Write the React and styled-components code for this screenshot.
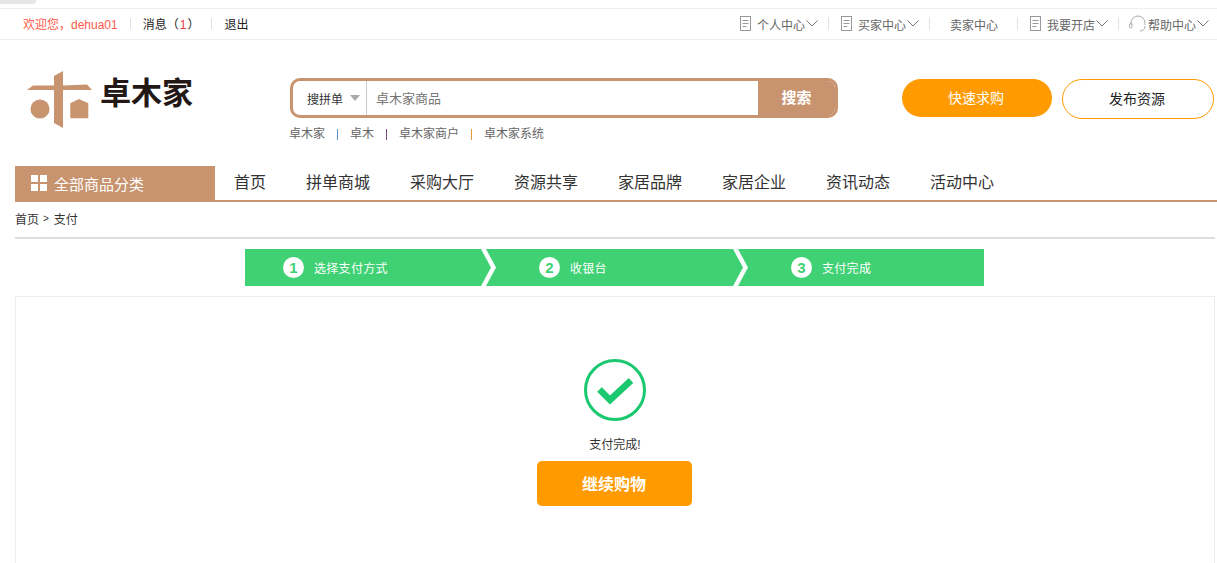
import React from 'react'
import styled, { createGlobalStyle } from 'styled-components'

const GlobalStyle = createGlobalStyle`
  html, body {
    margin: 0;
    padding: 0;
    height: 100%;
    overflow: hidden;
    background: #fff;
  }
  body {
    font-family: "Liberation Sans", "Noto Sans CJK SC", sans-serif;
    font-size: 12px;
    color: #333;
  }
  * { box-sizing: border-box; }
`

const Page = styled.div`
  width: 1217px;
`
const TabStrip = styled.div`
  height: 8px;
`
const TabStub = styled.div`
  width: 36px;
  height: 4px;
  background: #e6e6e6;
  border-bottom-right-radius: 4px;
`
const TopBar = styled.div`
  height: 32px;
  border-top: 1px solid #eee;
  border-bottom: 1px solid #eee;
  display: flex;
  justify-content: space-between;
  align-items: center;
  padding: 0 3px 2px 23px;
`
const TopGroup = styled.div`
  display: flex;
  align-items: center;
`
const Welcome = styled.span`
  color: #ff5a4a;
`
const TopLink = styled.span`
  color: #222;
`
const Red = styled.span`
  color: #e4393c;
  margin: 0 1px;
`
const TopSep = styled.i`
  width: 1px;
  height: 11px;
  background: #dde;
  margin: 0 12px;
`
const MenuItem = styled.div`
  flex: none;
  display: flex;
  align-items: center;
  white-space: nowrap;
  color: #666;
  width: ${p => p.$w}px;
  padding-left: ${p => p.$pad || 0}px;
`
const MenuLabel = styled.span`
  padding-top: 2px;
`
const MenuSep = styled.i`
  width: 1px;
  height: 13px;
  background: #dde3ea;
  flex: none;
`
const Header = styled.div`
  height: 126px;
  display: flex;
  padding: 31px 3px 0 27px;
`
const LogoBox = styled.div`
  width: 263px;
  display: flex;
  align-items: flex-start;
  gap: 8px;
`
const LogoText = styled.div`
  font-size: 31px;
  font-weight: 700;
  line-height: 31px;
  color: #231815;
  margin-top: 7px;
`
const SearchCol = styled.div`
  width: 548px;
  padding-top: 7px;
`
const SearchBox = styled.div`
  height: 40px;
  border: 3px solid #c7946f;
  border-radius: 10px;
  display: flex;
  overflow: hidden;
`
const ScopeSelect = styled.div`
  width: 74px;
  border-right: 1px solid #ccc;
  display: flex;
  align-items: center;
  padding-left: 14px;
  color: #333;
`
const Caret = styled.i`
  margin-left: 7px;
  border: 5px solid transparent;
  border-top: 6px solid #aaa;
  border-bottom: 0;
`
const SearchInput = styled.div`
  flex: 1;
  font-size: 13px;
  color: #757575;
  display: flex;
  align-items: center;
  padding: 0 0 2px 9px;
`
const SearchBtn = styled.div`
  width: 77px;
  background: #c7946f;
  color: #fff;
  font-size: 15px;
  font-weight: 700;
  display: flex;
  align-items: center;
  justify-content: center;
  padding-bottom: 4px;
`
const HotLinks = styled.div`
  display: flex;
  align-items: center;
  margin: 9px 0 0 -1px;
  color: #666;
  line-height: 14px;
`
const HotSep = styled.i`
  width: 1px;
  height: 11px;
  margin: 0 12px;
  background: ${p => p.$c};
`
const Actions = styled.div`
  margin-left: 64px;
  display: flex;
  gap: 10px;
  padding-top: 8px;
  align-items: flex-start;
`
const PillBtn = styled.div`
  height: ${p => (p.$solid ? 38 : 40)}px;
  width: ${p => (p.$solid ? 150 : 152)}px;
  border-radius: 20px;
  display: flex;
  align-items: center;
  justify-content: center;
  font-size: 14px;
  padding: 0 2px 2px 0;
  background: ${p => (p.$solid ? '#ff9a00' : '#fff')};
  color: ${p => (p.$solid ? '#fff' : '#222')};
  border: ${p => (p.$solid ? 'none' : '1px solid #ff9a00')};
`
const NavBar = styled.div`
  margin-left: 15px;
  width: 1202px;
  height: 36px;
  border-bottom: 2px solid #c7946f;
  display: flex;
`
const CategoryBtn = styled.div`
  width: 200px;
  height: 34px;
  background: #c7946f;
  color: #fff;
  font-size: 15px;
  display: flex;
  align-items: center;
  padding-left: 16px;
  gap: 7px;
`
const NavList = styled.div`
  display: flex;
  align-items: center;
  gap: 40px;
  padding: 0 0 4px 19px;
  font-size: 16px;
  color: #333;
  height: 34px;
`
const Crumbs = styled.div`
  margin-left: 15px;
  width: 1200px;
  height: 37px;
  border-bottom: 2px solid #ddd;
  display: flex;
  align-items: center;
  padding-bottom: 2px;
  gap: 4px;
  color: #333;
`
const CrumbArrow = styled.span`
  font-size: 10px;
  margin-right: 1px;
`
const Steps = styled.div`
  margin: 10px 0 10px 245px;
  display: flex;
  width: 739px;
  height: 37px;
`
const Step = styled.div`
  flex: none;
  width: ${p => p.$w}px;
  margin-left: ${p => p.$ml || 0}px;
  height: 37px;
  background: #3fd174;
  color: #fff;
  letter-spacing: 0.3px;
  display: flex;
  align-items: center;
  gap: 10px;
  padding-left: ${p => p.$pad}px;
  clip-path: ${p => p.$clip};
`
const StepNum = styled.span`
  width: 21px;
  height: 21px;
  border-radius: 50%;
  background: #fff;
  color: #3fd174;
  font-size: 15px;
  font-weight: 700;
  display: flex;
  align-items: center;
  justify-content: center;
`
const Card = styled.div`
  margin-left: 15px;
  width: 1200px;
  height: 300px;
  border: 1px solid #eee;
  display: flex;
  flex-direction: column;
  align-items: center;
  padding-top: 62px;
`
const DoneText = styled.div`
  margin-top: 16px;
  line-height: 16px;
  color: #333;
`
const ContinueBtn = styled.div`
  margin: 8px 2px 0 0;
  width: 155px;
  height: 45px;
  border-radius: 5px;
  background: #ff9a00;
  color: #fff;
  font-size: 16px;
  font-weight: 700;
  display: flex;
  align-items: center;
  justify-content: center;
  padding-bottom: 2px;
`

const DocIcon = () => (
  <svg width="11" height="15" viewBox="0 0 11 15" fill="none" stroke="#999" strokeWidth="1" style={{ marginRight: 6 }}>
    <rect x="0.5" y="0.5" width="10" height="14" />
    <path d="M2.5 4.5h6M2.5 7.5h6M2.5 10.5h4" />
  </svg>
)

const ChevronDown = () => (
  <svg width="12" height="7" viewBox="0 0 12 7" fill="none" stroke="#777" strokeWidth="1" style={{ marginLeft: 1 }}>
    <path d="M0.5 0.5L6 6L11.5 0.5" />
  </svg>
)

const Headset = () => (
  <svg width="19" height="17" viewBox="0 0 19 17" fill="none" stroke="#aaa" strokeWidth="1">
    <path d="M2 10V8a7 7 0 0 1 14 0v2" />
    <rect x="0.5" y="8.5" width="2.5" height="4.5" rx="1.2" />
    <path d="M16 11c0 3-2 5-5 5" />
  </svg>
)

const LogoMark = () => (
  <svg width="65" height="58" viewBox="0 0 65 58" fill="#c7946f">
    <path d="M27 5L36 0V57L27 52Z" />
    <path d="M0 19L6 14.5H27V19Z" />
    <path d="M36 14.5L60 13.5L65 19H36Z" />
    <circle cx="13" cy="38" r="9.5" />
    <path d="M43.3 32.3L52 28L61.3 32.3V47.3H43.3Z" />
  </svg>
)

const GridIcon = () => (
  <svg width="16" height="16" viewBox="0 0 16 16" fill="#fff">
    <rect width="7" height="7" />
    <rect x="9" width="7" height="7" />
    <rect y="9" width="7" height="7" />
    <rect x="9" y="9" width="7" height="7" />
  </svg>
)

const CheckCircle = () => (
  <svg width="62" height="62" viewBox="0 0 62 62" fill="none">
    <circle cx="31" cy="31" r="29.5" stroke="#19c86f" strokeWidth="3" />
    <path d="M15.5 30.5L26 41L47 21.5" stroke="#19c86f" strokeWidth="6.5" />
  </svg>
)

const menus = [
  { label: '个人中心', w: 88, pad: 0, icon: <DocIcon />, arrow: true },
  { label: '买家中心', w: 100, pad: 12, icon: <DocIcon />, arrow: true },
  { label: '卖家中心', w: 87, pad: 20 },
  { label: '我要开店', w: 100, pad: 12, icon: <DocIcon />, arrow: true },
  { label: '帮助中心', w: 95, pad: 10, icon: <Headset />, arrow: true }
]

const navItems = ['首页', '拼单商城', '采购大厅', '资源共享', '家居品牌', '家居企业', '资讯动态', '活动中心']

const steps = [
  { n: 1, label: '选择支付方式', w: 246, pad: 38, clip: 'polygon(0 0, 236px 0, 246px 50%, 236px 100%, 0 100%)' },
  { n: 2, label: '收银台', w: 257, ml: -5, pad: 53, clip: 'polygon(0 0, 247px 0, 257px 50%, 247px 100%, 0 100%, 10px 50%)' },
  { n: 3, label: '支付完成', w: 246, ml: -5, pad: 53, clip: 'polygon(0 0, 246px 0, 246px 100%, 0 100%, 10px 50%)' }
]

export default function App() {
  return (
    <Page>
      <GlobalStyle />
      <TabStrip><TabStub /></TabStrip>
      <TopBar>
        <TopGroup>
          <Welcome>欢迎您，dehua01</Welcome>
          <TopSep />
          <TopLink>消息（<Red>1</Red>）</TopLink>
          <TopSep />
          <TopLink>退出</TopLink>
        </TopGroup>
        <TopGroup>
          {menus.map((m, i) => (
            <React.Fragment key={m.label}>
              {i > 0 && <MenuSep />}
              <MenuItem $w={m.w} $pad={m.pad}>
                {m.icon}
                <MenuLabel>{m.label}</MenuLabel>
                {m.arrow && <ChevronDown />}
              </MenuItem>
            </React.Fragment>
          ))}
        </TopGroup>
      </TopBar>
      <Header>
        <LogoBox>
          <LogoMark />
          <LogoText>卓木家</LogoText>
        </LogoBox>
        <SearchCol>
          <SearchBox>
            <ScopeSelect>搜拼单<Caret /></ScopeSelect>
            <SearchInput>卓木家商品</SearchInput>
            <SearchBtn>搜索</SearchBtn>
          </SearchBox>
          <HotLinks>
            卓木家<HotSep $c="#5b9bd5" />卓木<HotSep $c="#7d4e7d" />卓木家商户<HotSep $c="#e09a3c" />卓木家系统
          </HotLinks>
        </SearchCol>
        <Actions>
          <PillBtn $solid>快速求购</PillBtn>
          <PillBtn>发布资源</PillBtn>
        </Actions>
      </Header>
      <NavBar>
        <CategoryBtn><GridIcon />全部商品分类</CategoryBtn>
        <NavList>
          {navItems.map(n => <span key={n}>{n}</span>)}
        </NavList>
      </NavBar>
      <Crumbs>首页 <CrumbArrow>&gt;</CrumbArrow> 支付</Crumbs>
      <Steps>
        {steps.map(s => (
          <Step key={s.n} $w={s.w} $ml={s.ml} $pad={s.pad} $clip={s.clip}>
            <StepNum>{s.n}</StepNum>
            {s.label}
          </Step>
        ))}
      </Steps>
      <Card>
        <CheckCircle />
        <DoneText>支付完成!</DoneText>
        <ContinueBtn>继续购物</ContinueBtn>
      </Card>
    </Page>
  )
}
